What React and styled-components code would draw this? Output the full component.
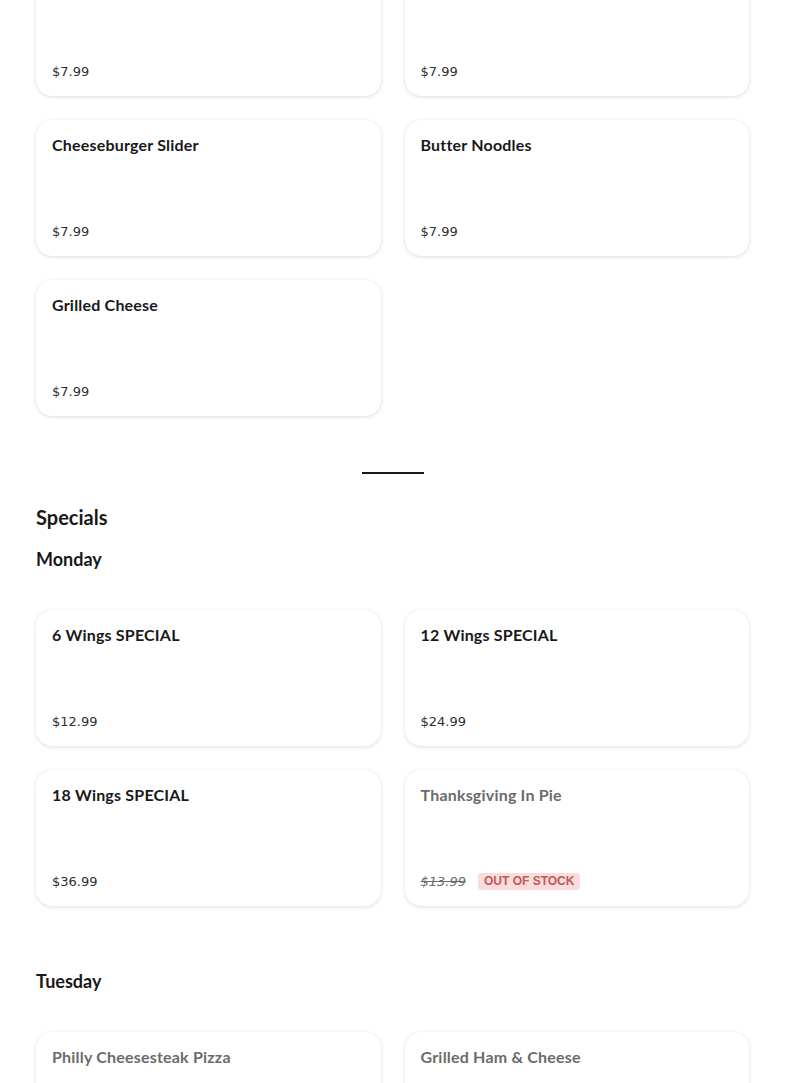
import React from "react";
import styled, { createGlobalStyle } from "styled-components";

const GlobalStyle = createGlobalStyle`
  body {
    margin: 0;
    background: #ffffff;
    font-family: Lato, "Noto Sans", sans-serif;
    color: #191919;
  }
`;

const kids = [
  { name: "", price: "$7.99" },
  { name: "", price: "$7.99" },
  { name: "Cheeseburger Slider", price: "$7.99" },
  { name: "Butter Noodles", price: "$7.99" },
  { name: "Grilled Cheese", price: "$7.99" },
];

const monday = [
  { name: "6 Wings SPECIAL", price: "$12.99" },
  { name: "12 Wings SPECIAL", price: "$24.99" },
  { name: "18 Wings SPECIAL", price: "$36.99" },
  { name: "Thanksgiving In Pie", price: "$13.99", soldOut: true },
];

const tuesday = [
  { name: "Philly Cheesesteak Pizza", price: "", soldOut: true },
  { name: "Grilled Ham & Cheese", price: "", soldOut: true },
];

const ItemCard = ({ item }) => (
  <Card>
    <Title $muted={item.soldOut}>{item.name}</Title>
    <PriceRow>
      <Price $struck={item.soldOut}>{item.price}</Price>
      {item.soldOut && item.price && <Badge>Out of stock</Badge>}
    </PriceRow>
  </Card>
);

const App = () => {
  return (
    <>
      <GlobalStyle />
      <Page>
        <Grid $top>
          {kids.map((item, i) => (
            <ItemCard key={i} item={item} />
          ))}
        </Grid>

        <Divider />

        <Category>Specials</Category>
        <Day>Monday</Day>
        <Grid>
          {monday.map((item, i) => (
            <ItemCard key={i} item={item} />
          ))}
        </Grid>

        <Day $spaced>Tuesday</Day>
        <Grid>
          {tuesday.map((item, i) => (
            <ItemCard key={i} item={item} />
          ))}
        </Grid>
      </Page>
    </>
  );
};

const Page = styled.main`
  padding: 0 36px;
  height: 1083px;
  overflow: hidden;
`;

const Grid = styled.div`
  display: grid;
  grid-template-columns: 1fr 1fr;
  gap: 24px;
  margin-top: ${(p) => (p.$top ? "-40px" : "0")};
`;

const Card = styled.div`
  height: 136px;
  box-sizing: border-box;
  padding: 16px;
  border-radius: 16px;
  background: #fff;
  box-shadow: 0 1px 4px rgba(0, 0, 0, 0.13), 0 0 1px rgba(0, 0, 0, 0.05);
  display: flex;
  flex-direction: column;
  justify-content: space-between;
`;

const Title = styled.div`
  font-size: 16px;
  font-weight: 700;
  line-height: 18px;
  letter-spacing: 0.2px;
  color: ${(p) => (p.$muted ? "#6b6b6b" : "#191919")};
`;

const PriceRow = styled.div`
  display: flex;
  align-items: center;
  gap: 12px;
  height: 18px;
`;

const Price = styled.span`
  font-family: "DejaVu Sans", sans-serif;
  font-size: 13px;
  color: ${(p) => (p.$struck ? "#6b6b6b" : "#2f2f2f")};
  font-style: ${(p) => (p.$struck ? "italic" : "normal")};
  text-decoration: ${(p) => (p.$struck ? "line-through" : "none")};
`;

const Badge = styled.span`
  font-family: "Liberation Sans", Arial, sans-serif;
  font-size: 12px;
  font-weight: 700;
  text-transform: uppercase;
  color: #bd5a5a;
  background: #fbdcdc;
  border-radius: 3px;
  padding: 1px 6px;
  line-height: 15px;
`;

const Divider = styled.hr`
  width: 62px;
  height: 2px;
  border: 0;
  background: #191919;
  margin: 56px auto 29px;
`;

const Category = styled.h2`
  margin: 0;
  font-size: 20px;
  font-weight: 700;
  line-height: 28px;
  color: #191919;
`;

const Day = styled.h3`
  margin: ${(p) => (p.$spaced ? "63px" : "16px")} 0 39px;
  font-size: 18px;
  font-weight: 700;
  line-height: 24px;
  color: #191919;
`;

export default App;
